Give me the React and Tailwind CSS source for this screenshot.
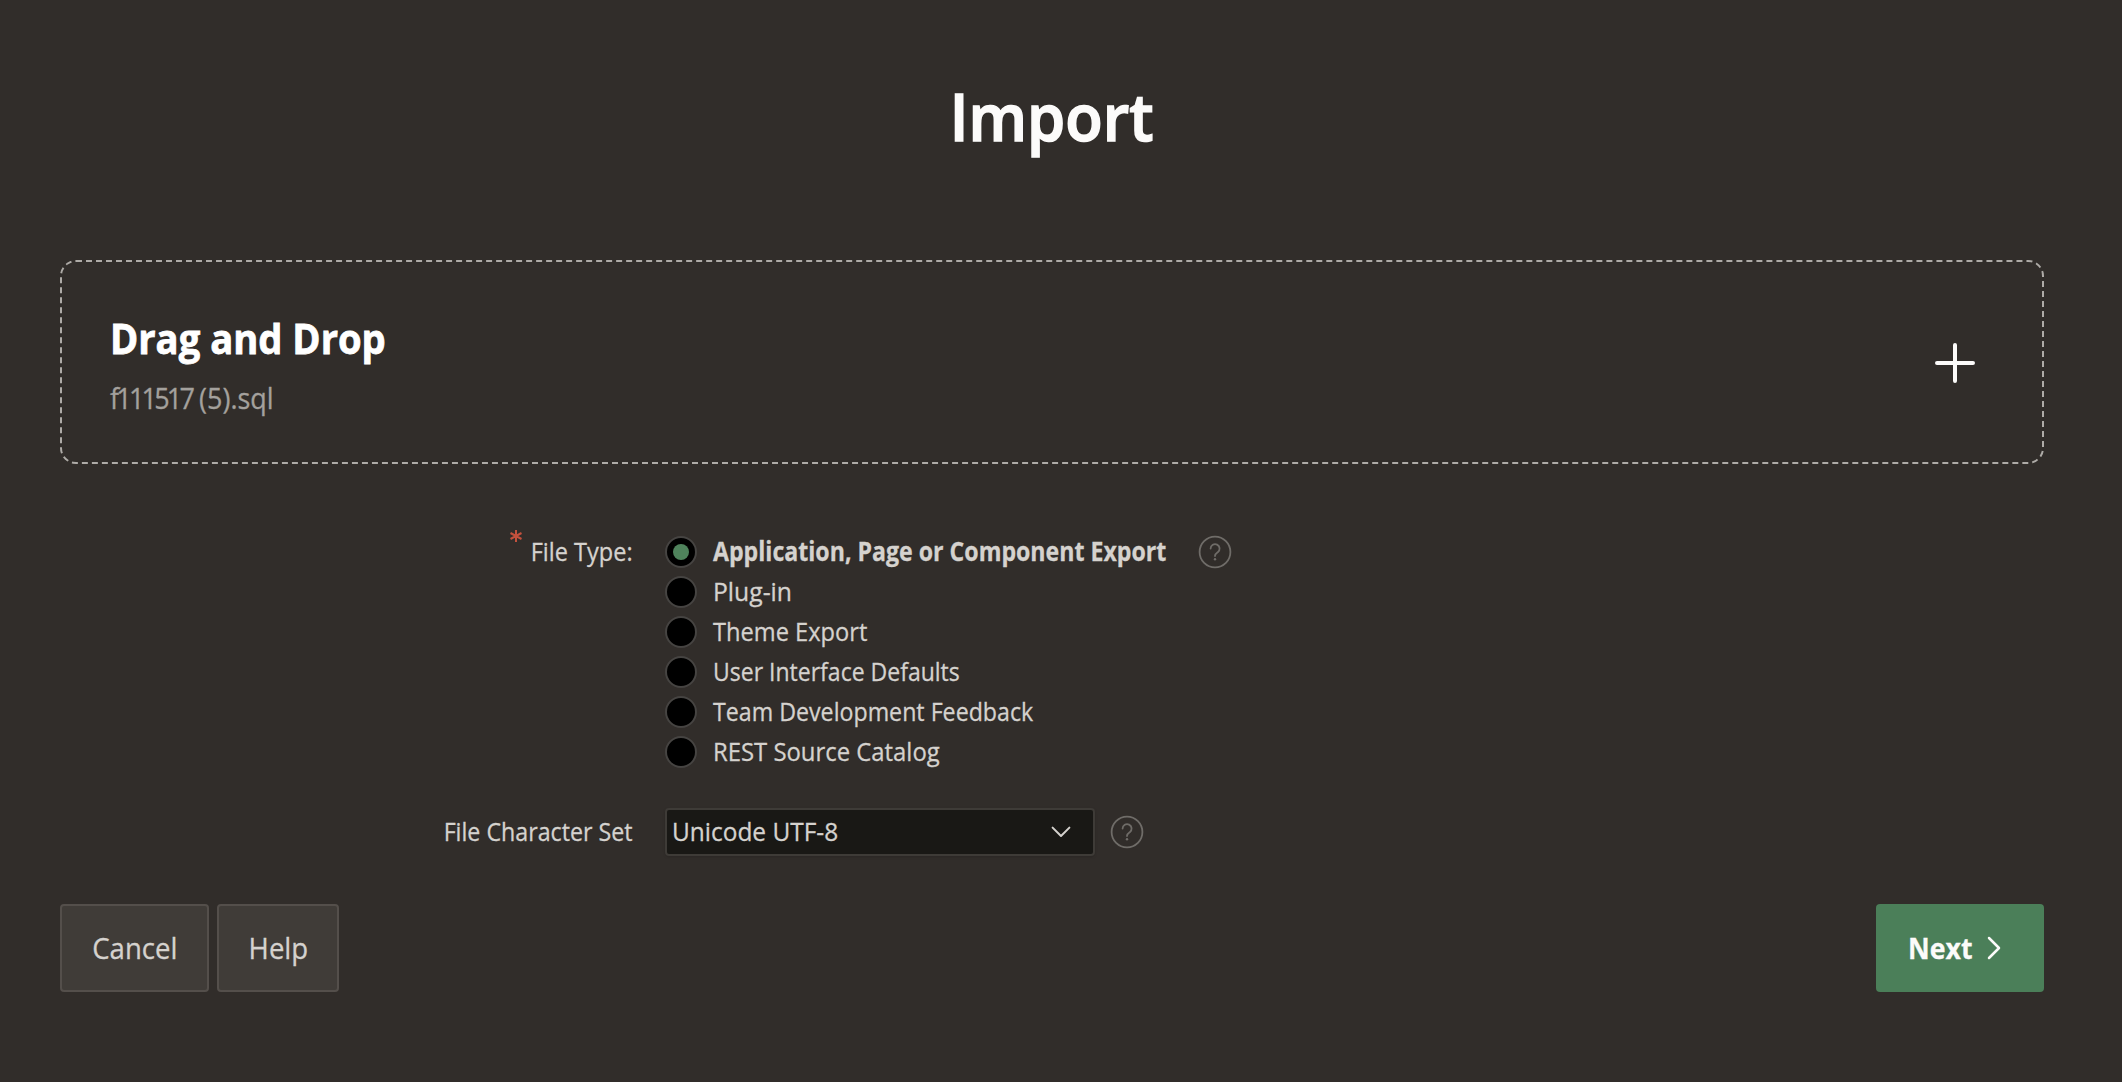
import React from 'react';

const fileTypes = [
  { label: 'Application, Page or Component Export', className: 'font-bold scale-x-[0.89]', checked: true },
  { label: 'Plug-in', className: 'scale-x-[0.95]' },
  { label: 'Theme Export', className: 'scale-x-[0.909]' },
  { label: 'User Interface Defaults', className: 'scale-x-[0.885]' },
  { label: 'Team Development Feedback', className: 'scale-x-[0.892]' },
  { label: 'REST Source Catalog', className: 'scale-x-[0.918]' },
];

function HelpIcon() {
  return (
    <svg className="size-[34px] shrink-0 text-[#6f6c68]" viewBox="0 0 34 34" fill="none" stroke="currentColor" strokeWidth="1.8" strokeLinecap="round" strokeLinejoin="round">
      <circle cx="17" cy="17" r="15.4" />
      <path d="M12.6 13.6a4.5 4.5 0 1 1 7.2 3.6c-1.7 1.2-2.8 1.9-2.8 3.9" />
      <circle cx="17" cy="24.3" r="1.2" fill="currentColor" stroke="none" />
    </svg>
  );
}

function Radio({ checked }) {
  return (
    <span className="flex size-8 shrink-0 items-center justify-center rounded-full border-2 border-[#464442] bg-black">
      {checked && <span className="size-4 rounded-full bg-[#4f835c]" />}
    </span>
  );
}

export default function App() {
  return (
    <div className="h-[1082px] w-[2122px] overflow-hidden bg-[#312d2a] pr-[78px] pl-[60px] font-['Open_Sans',sans-serif] text-[26px] text-[#d5d2ce] [-webkit-text-stroke:0.3px_currentColor]">
      <h1 className="pt-[75px] text-center text-[66px] leading-[80px] font-semibold text-[#fcfbfa] [-webkit-text-stroke:1.6px_currentColor]">
        <span className="inline-block scale-x-[0.93]">Import</span>
      </h1>

      <section className="mt-[105px] flex h-[204px] items-start justify-between rounded-2xl border-2 border-dashed border-[#aeaba7] pr-[66px] pl-[47px]">
        <div className="flex flex-col items-start gap-3 pt-12 whitespace-nowrap">
          <h2 className="ml-px origin-left scale-x-[0.909] text-[42px] leading-[56px] font-bold text-white [-webkit-text-stroke:0.8px_currentColor]">Drag and Drop</h2>
          <p className="ml-px origin-left scale-x-[0.93] text-[29px] leading-10 text-[#a4a19d]">
            <span className="tracking-[-3px]">f111517</span> (5).sql
          </p>
        </div>
        <svg className="mt-[80px] size-[42px]" viewBox="0 0 42 42" fill="none" stroke="#fcfbfa" strokeWidth="4" strokeLinecap="round">
          <path d="M21 3v36M3 21h36" />
        </svg>
      </section>

      <div className="mt-[68px] flex items-start">
        <div className="flex w-[573px] justify-end">
          <svg className="mt-[-3px] mr-[-3px] size-[14px]" viewBox="0 0 14 14" fill="none" stroke="#c4513d" strokeWidth="2">
            <path d="M7 1v12M1.5 4l11 6M12.5 4l-11 6" />
          </svg>
          <span className="origin-right scale-x-[0.905] leading-[39px] whitespace-nowrap">File Type:</span>
        </div>
        <div className="ml-8 flex w-[501px] flex-col">
          {fileTypes.map((t) => (
            <label key={t.label} className="flex h-10 gap-4">
              <span className="pt-1"><Radio checked={t.checked} /></span>
              <span className={`origin-left leading-[39px] whitespace-nowrap ${t.className}`}>{t.label}</span>
            </label>
          ))}
        </div>
        <div className="ml-[32px] pt-[3px]"><HelpIcon /></div>
      </div>

      <div className="mt-9 flex h-12 items-center">
        <span className="flex w-[573px] justify-end pb-px">
          <span className="origin-right scale-x-[0.893] whitespace-nowrap">File Character Set</span>
        </span>
        <div className="ml-8 flex h-12 w-[430px] items-center justify-between rounded border-2 border-[#3e3b37] bg-[#191815] pr-[22px] pl-[5px] shadow-sm">
          <span className="origin-left scale-x-[0.94] pb-px whitespace-nowrap">Unicode UTF-8</span>
          <svg className="h-3 w-5" viewBox="0 0 20 12" fill="none" stroke="#d5d2ce" strokeWidth="2" strokeLinecap="round" strokeLinejoin="round">
            <path d="M1.6 1.6 10 10l8.400-8.400" />
          </svg>
        </div>
        <div className="ml-[15px]"><HelpIcon /></div>
      </div>

      <div className="mt-12 flex h-[88px] gap-2 text-[29px]">
        <button className="w-[149px] rounded border-2 border-[#544f4b] bg-[#403c38]">
          <span className="inline-block scale-x-[0.95]">Cancel</span>
        </button>
        <button className="w-[122px] rounded border-2 border-[#544f4b] bg-[#403c38]">
          <span className="inline-block scale-x-[0.95]">Help</span>
        </button>
        <button className="ml-auto flex w-[168px] items-center rounded bg-[#4b7f59] pl-8 font-bold text-[#fcfbfa]">
          <span className="origin-left scale-x-[0.92]">Next</span>
          <svg className="ml-[9px] h-6 w-[14px]" viewBox="0 0 14 24" fill="none" stroke="currentColor" strokeWidth="2.500" strokeLinecap="round" strokeLinejoin="round">
            <path d="M2 2l10 10L2 22" />
          </svg>
        </button>
      </div>
    </div>
  );
}
